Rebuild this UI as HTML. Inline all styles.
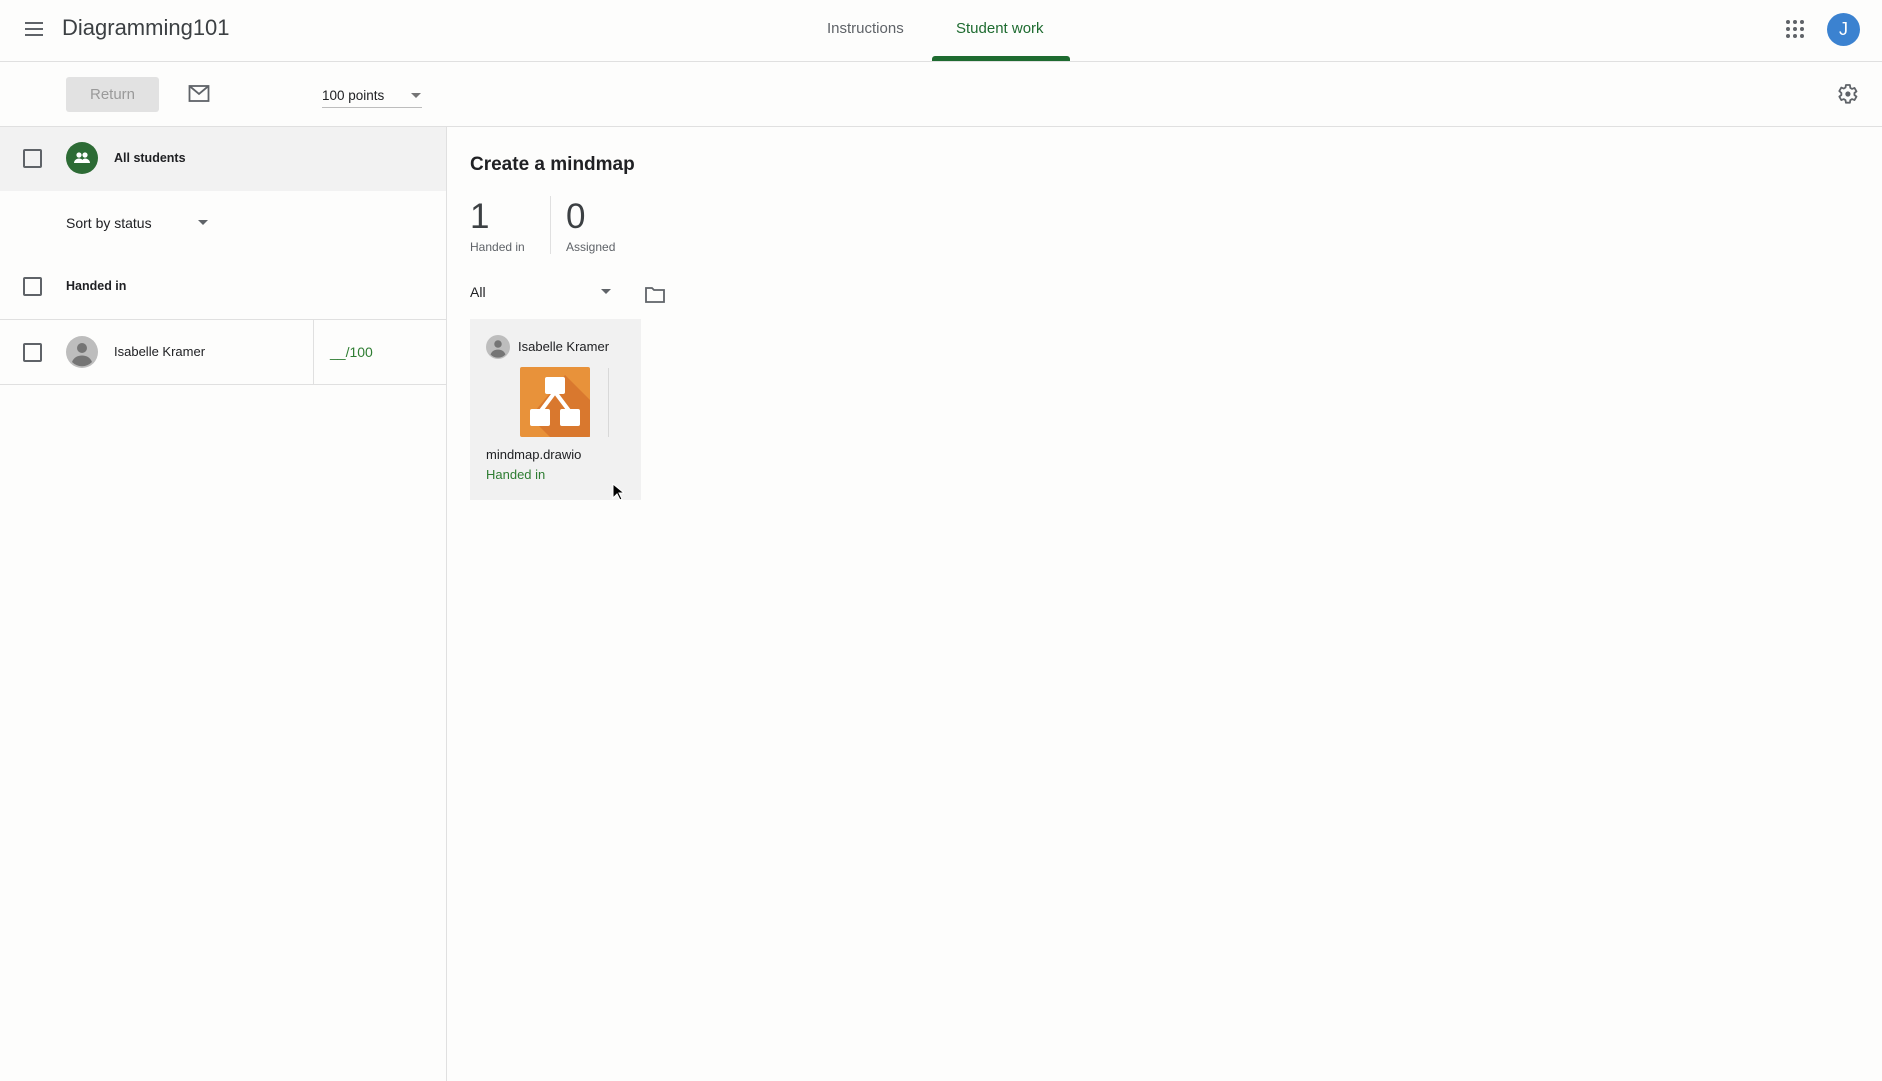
<!DOCTYPE html>
<html><head><meta charset="utf-8"><style>
*{margin:0;padding:0;box-sizing:border-box}
body{width:1882px;height:1081px;overflow:hidden;background:#fdfdfc;font-family:"Liberation Sans",Arial,sans-serif;color:#202124;position:relative}
.a{position:absolute}
.hl{position:absolute;left:0;right:0;height:1px;background:#e0e0e0}
.cb{position:absolute;width:19px;height:19px;border:2px solid #5f6368;border-radius:2px;left:23px}
.t{position:absolute;white-space:nowrap}
</style></head><body>
<svg class="a" style="left:22px;top:17px" width="24" height="24" viewBox="0 0 24 24"><path d="M3 6h18M3 12h18M3 18h18" stroke="#5f6368" stroke-width="2"/></svg>
<div class="t" style="left:62px;top:15px;font-size:22px;color:#3c4043">Diagramming101</div>
<div class="t" style="left:827px;top:20px;font-size:15px;color:#5f6368">Instructions</div>
<div class="t" style="left:956px;top:20px;font-size:15px;color:#1e6b30">Student work</div>
<div class="a" style="left:932px;top:56px;width:138px;height:5px;background:#1e6b30;border-radius:3px 3px 0 0"></div>
<svg class="a" style="left:1784px;top:18px" width="22" height="22" viewBox="0 0 22 22" fill="#5f6368"><circle cx="4" cy="4" r="2"/><circle cx="11" cy="4" r="2"/><circle cx="18" cy="4" r="2"/><circle cx="4" cy="11" r="2"/><circle cx="11" cy="11" r="2"/><circle cx="18" cy="11" r="2"/><circle cx="4" cy="18" r="2"/><circle cx="11" cy="18" r="2"/><circle cx="18" cy="18" r="2"/></svg>
<div class="a" style="left:1827px;top:13px;width:33px;height:33px;border-radius:50%;background:#3b82d0;color:#fff;font-size:18px;text-align:center;line-height:33px">J</div>
<div class="hl" style="top:61px"></div>
<div class="a" style="left:66px;top:77px;width:93px;height:35px;background:#e2e2e2;border-radius:3px;color:#9a9a9a;font-size:15px;text-align:center;line-height:35px">Return</div>
<svg class="a" style="left:188px;top:84px" width="22" height="20" viewBox="0 0 22 20"><rect x="1.5" y="2" width="19" height="15" fill="none" stroke="#5f6368" stroke-width="1.8"/><path d="M1.5 2l9.5 8 9.5-8" fill="none" stroke="#5f6368" stroke-width="1.8"/></svg>
<div class="t" style="left:322px;top:88px;font-size:13.5px">100 points</div>
<div class="a" style="left:322px;top:107px;width:100px;height:1px;background:#bdbdbd"></div>
<div class="a" style="left:411px;top:93px;border-left:5px solid transparent;border-right:5px solid transparent;border-top:5px solid #757575"></div>
<svg class="a" style="left:1835px;top:82px" width="24" height="24" viewBox="0 0 24 24"><path fill="none" stroke="#5f6368" stroke-width="1.8" stroke-linejoin="round" d="M19.4 13a7.5 7.5 0 000-2l2.1-1.6-2-3.5-2.5 1a7.4 7.4 0 00-1.7-1L14.9 3h-4l-.4 2.6a7.4 7.4 0 00-1.7 1l-2.5-1-2 3.5L6.4 11a7.5 7.5 0 000 2l-2.1 1.6 2 3.5 2.5-1c.5.4 1.1.8 1.7 1l.4 2.6h4l.4-2.6c.6-.2 1.2-.6 1.7-1l2.5 1 2-3.5z"/><circle cx="12.9" cy="12" r="2.6" fill="#5f6368"/></svg>
<div class="hl" style="top:126px"></div>
<div class="a" style="left:0;top:127px;width:446px;height:64px;background:#f2f2f2"></div>
<div class="a" style="left:446px;top:127px;width:1px;height:954px;background:#e0e0e0"></div>
<div class="cb" style="top:149px"></div>
<div class="a" style="left:66px;top:142px;width:32px;height:32px;border-radius:50%;background:#2d6b35"></div>
<svg class="a" style="left:72px;top:148px" width="20" height="20" viewBox="0 0 20 20" fill="#fff"><circle cx="7" cy="7" r="2.6"/><circle cx="13" cy="7" r="2.6"/><path d="M2 15c0-3 3-4.5 5-4.5s5 1.5 5 4.5zM10 15c0-2 .5-3 1-3.8.6-.2 1.3-.7 2-.7 2 0 5 1.5 5 4.5z"/></svg>
<div class="t" style="left:114px;top:151px;font-size:12.5px;font-weight:bold">All students</div>
<div class="t" style="left:66px;top:215px;font-size:14px">Sort by status</div>
<div class="a" style="left:198px;top:220px;border-left:5px solid transparent;border-right:5px solid transparent;border-top:5px solid #5f6368"></div>
<div class="cb" style="top:277px"></div>
<div class="t" style="left:66px;top:279px;font-size:12.5px;font-weight:bold">Handed in</div>
<div class="a" style="left:0;top:319px;width:446px;height:1px;background:#e0e0e0"></div>
<div class="a" style="left:313px;top:320px;width:1px;height:64px;background:#e0e0e0"></div>
<div class="a" style="left:0;top:384px;width:446px;height:1px;background:#e0e0e0"></div>
<div class="cb" style="top:343px"></div>
<svg class="a" style="left:66px;top:336px" width="32" height="32" viewBox="0 0 32 32"><circle cx="16" cy="16" r="16" fill="#bdbdbd"/><circle cx="16" cy="12" r="5" fill="#757575"/><path d="M6 26c2-5 6-6.5 10-6.5s8 1.5 10 6.5a14 14 0 01-20 0z" fill="#757575"/></svg>
<div class="t" style="left:114px;top:344px;font-size:13px">Isabelle Kramer</div>
<div class="t" style="left:330px;top:344px;font-size:14px;color:#2e7d32">__/100</div>
<div class="t" style="left:470px;top:154px;font-size:19px;font-weight:bold">Create a mindmap</div>
<div class="t" style="left:470px;top:197px;font-size:35px;color:#3c4043">1</div>
<div class="t" style="left:470px;top:240px;font-size:12px;color:#5f6368">Handed in</div>
<div class="a" style="left:550px;top:196px;width:1px;height:58px;background:#e0e0e0"></div>
<div class="t" style="left:566px;top:197px;font-size:35px;color:#3c4043">0</div>
<div class="t" style="left:566px;top:240px;font-size:12px;color:#5f6368">Assigned</div>
<div class="t" style="left:470px;top:284px;font-size:14px">All</div>
<div class="a" style="left:601px;top:289px;border-left:5px solid transparent;border-right:5px solid transparent;border-top:5px solid #5f6368"></div>
<svg class="a" style="left:644px;top:285px" width="22" height="20" viewBox="0 0 22 20"><path d="M2 3h6l2 2h10v12H2z" fill="none" stroke="#5f6368" stroke-width="1.8"/></svg>
<div class="a" style="left:470px;top:319px;width:171px;height:181px;background:#f1f1f1"></div>
<svg class="a" style="left:486px;top:335px" width="24" height="24" viewBox="0 0 32 32"><circle cx="16" cy="16" r="16" fill="#bdbdbd"/><circle cx="16" cy="12" r="5" fill="#757575"/><path d="M6 26c2-5 6-6.5 10-6.5s8 1.5 10 6.5a14 14 0 01-20 0z" fill="#757575"/></svg>
<div class="t" style="left:518px;top:339px;font-size:13px">Isabelle Kramer</div>
<svg class="a" style="left:520px;top:367px" width="70" height="70" viewBox="0 0 70 70"><rect width="70" height="70" rx="2" fill="#e8923a"/><path d="M45 8L70 33V70H30L10 50z" fill="#d5722c" opacity=".8"/><path d="M35 25L20 45M35 25L50 45" stroke="#fff" stroke-width="4"/><rect x="25" y="10" width="20" height="17" rx="2" fill="#fff"/><rect x="10" y="42" width="20" height="17" rx="2" fill="#fff"/><rect x="40" y="42" width="20" height="17" rx="2" fill="#fff"/></svg>
<div class="a" style="left:608px;top:368px;width:1px;height:69px;background:#d8d8d8"></div>
<div class="t" style="left:486px;top:447px;font-size:13px">mindmap.drawio</div>
<div class="t" style="left:486px;top:467px;font-size:13px;color:#2e7d32">Handed in</div>
<svg class="a" style="left:612px;top:483px" width="12" height="18" viewBox="0 0 12 18"><path d="M1 1v14l4-4 3 6 2-1-3-6h5z" fill="#000" stroke="#fff" stroke-width="1"/></svg>
</body></html>
